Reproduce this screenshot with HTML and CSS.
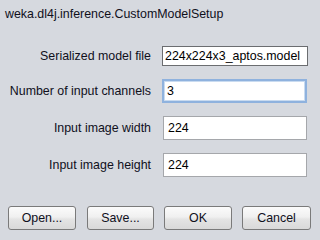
FILE: index.html
```html
<!DOCTYPE html>
<html>
<head>
<meta charset="utf-8">
<link rel="stylesheet" href="styles.css">
</head>
<body>
<div class="dialog">
  <div class="title">weka.dl4j.inference.CustomModelSetup</div>
  <div class="form">
    <label class="lbl">Serialized model file</label>
    <div class="field file">224x224x3_aptos.model</div>
    <label class="lbl">Number of input channels</label>
    <div class="field focused">3</div>
    <label class="lbl">Input image width</label>
    <div class="field">224</div>
    <label class="lbl">Input image height</label>
    <div class="field">224</div>
  </div>
  <div class="buttons">
    <button class="btn">Open...</button>
    <button class="btn">Save...</button>
    <button class="btn">OK</button>
    <button class="btn">Cancel</button>
  </div>
</div>
</body>
</html>
```
FILE: styles.css
```css
html, body {
  margin: 0;
  padding: 0;
  background: #d6d9df;
}
.dialog {
  width: 319px;
  height: 238px;
  font-family: "Liberation Sans", Arial, sans-serif;
  font-size: 12.4px;
  color: #10101c;
  box-sizing: border-box;
  padding-top: 7px;
}
.title {
  padding-left: 5px;
  height: 14px;
  line-height: 14px;
}
.form {
  display: grid;
  grid-template-columns: 151px 1fr;
  column-gap: 12px;
  row-gap: 13px;
  margin-top: 25px;
  padding-right: 12px;
  align-items: center;
}
.lbl {
  text-align: right;
  white-space: nowrap;
}
.field {
  height: 24px;
  box-sizing: border-box;
  background: #fff;
  border: 1px solid #a5a7ab;
  line-height: 22px;
  padding-left: 4px;
  color: #000;
  white-space: nowrap;
  overflow: hidden;
}
.field.file {
  height: 20px;
  line-height: 18px;
  border: 1px solid #6b6d70;
  padding-left: 2px;
  margin-left: -1px;
  margin-right: -1px;
}
.field.focused {
  border: 2px solid #8fb2de;
  box-shadow: inset 0 0 0 1px #c9dbf0;
  line-height: 20px;
  padding-left: 3px;
  margin-left: -1px;
}
.buttons {
  display: flex;
  gap: 10px;
  padding-left: 8px;
  margin-top: 29px;
}
.btn {
  width: 68px;
  height: 24px;
  box-sizing: border-box;
  border: 1px solid #7a7a7a;
  border-radius: 3px;
  background: linear-gradient(#fbfbfb 0%, #f0f0f0 45%, #e4e4e4 55%, #d9d9d9 100%);
  font-family: "Liberation Sans", Arial, sans-serif;
  font-size: 12.4px;
  color: #10101c;
  padding: 0;
}
.btn:nth-child(2) {
  margin-left: 1px;
  width: 67px;
}
.btn:nth-child(4) {
  width: 69px;
}
```
